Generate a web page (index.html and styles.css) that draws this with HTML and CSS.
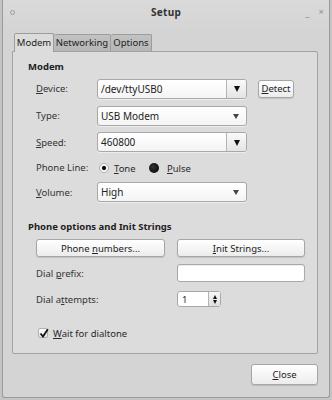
FILE: index.html
```html
<!DOCTYPE html>
<html>
<head>
<meta charset="utf-8">
<link rel="stylesheet" href="styles.css">
</head>
<body>
<div class="window">
  <div class="titlebar">
    <span class="wm-icon"></span>
    <span class="title">Setup</span>
    <span class="wm-btns"><span class="wm-min">_</span><span class="wm-close">×</span></span>
  </div>
  <div class="content">
    <div class="tabs">
      <div class="tab active">Modem</div>
      <div class="tab">Networking</div>
      <div class="tab">Options</div>
    </div>
    <div class="panel">
      <div class="heading">Modem</div>
      <div class="modem-grid">
        <div class="label"><u>D</u>evice:</div>
        <div class="combo editable"><span class="ctext">/dev/ttyUSB0</span><span class="carrow"><span class="tri"></span></span></div>
        <button class="btn detect"><u>D</u>etect</button>

        <div class="label">Type:</div>
        <div class="combo"><span class="ctext">USB Modem</span><span class="carrow plain"><span class="tri small"></span></span></div>
        <div></div>

        <div class="label"><u>S</u>peed:</div>
        <div class="combo editable"><span class="ctext">460800</span><span class="carrow"><span class="tri"></span></span></div>
        <div></div>

        <div class="label">Phone Line:</div>
        <div class="radios">
          <span class="radio on"></span><span class="rlabel first"><u>T</u>one</span>
          <span class="radio dark"></span><span class="rlabel second"><u>P</u>ulse</span>
        </div>
        <div></div>

        <div class="label"><u>V</u>olume:</div>
        <div class="combo"><span class="ctext">High</span><span class="carrow plain"><span class="tri small"></span></span></div>
        <div></div>
      </div>

      <div class="heading second">Phone options and Init Strings</div>
      <div class="btn-row">
        <button class="btn wide1">Phone <u>n</u>umbers...</button>
        <button class="btn wide2"><u>I</u>nit Strings...</button>
      </div>
      <div class="dial-grid">
        <div class="label">Dial <u>p</u>refix:</div>
        <div class="entry"></div>
        <div class="label">Dial a<u>t</u>tempts:</div>
        <div class="spin"><span class="stext">1</span><span class="sbtns"><span class="up"></span><span class="down"></span></span></div>
      </div>
      <div class="check-row">
        <span class="checkbox"><svg width="10" height="10" viewBox="0 0 10 10"><path d="M1.5 5.5 L4 8.5 L8.8 1.2" fill="none" stroke="#111" stroke-width="1.8"/></svg></span>
        <span class="clabel"><u>W</u>ait for dialtone</span>
      </div>
    </div>
    <div class="footer">
      <button class="btn close"><u>C</u>lose</button>
    </div>
  </div>
  <svg class="cursor" width="12" height="18" viewBox="0 0 12 18"><path d="M0.5 0.5 L0.5 14.5 L3.8 11.4 L6.2 16.8 L8.2 15.9 L5.9 10.6 L10.5 10.6 Z" fill="#fff" stroke="#000" stroke-width="1"/></svg>
</div>
</body>
</html>
```
FILE: styles.css
```css
html, body {
  margin: 0;
  padding: 0;
  background: #c4c4c4;
}
body {
  width: 332px;
  height: 400px;
  overflow: hidden;
  font-family: "Noto Sans", "DejaVu Sans", sans-serif;
  font-size: 9.5px;
  color: #2a2a2a;
}
.window {
  position: relative;
  margin-left: 2px;
  width: 326px;
  height: 397px;
  border: 1px solid #9a9a9a;
  border-top: none;
  border-radius: 0 0 3px 3px;
  background: #d4d4d4;
}
.titlebar {
  height: 33px;
  display: flex;
  align-items: flex-start;
  position: relative;
  background: linear-gradient(#dadada, #d4d4d4);
}
.wm-icon {
  position: absolute;
  left: 7px;
  top: 10px;
  width: 3px;
  height: 3px;
  border: 1px solid #9c9c9c;
  border-radius: 50%;
}
.title {
  width: 100%;
  text-align: center;
  font-weight: bold;
  font-size: 10px;
  color: #333;
  padding-top: 5px;
  letter-spacing: 0.3px;
}
.wm-btns {
  position: absolute;
  right: 5px;
  top: 5px;
  display: flex;
  gap: 9px;
  color: #8d8d8d;
  font-size: 9.5px;
}
.wm-min { position: relative; top: 1px; }
.content {
  padding-left: 9px;
}
.tabs {
  display: flex;
  height: 18px;
  margin-left: 2px;
  position: relative;
  z-index: 2;
}
.tab {
  height: 17px;
  margin-top: 1px;
  line-height: 16px;
  padding: 0;
  text-align: center;
  background: linear-gradient(#c2c2c2, #b6b6b6);
  border: 1px solid #9c9c9c;
  border-bottom: none;
  border-left: none;
  border-radius: 2px 2px 0 0;
  color: #222;
  font-size: 9.5px;
  box-sizing: border-box;
  white-space: nowrap;
}
.tab.active {
  height: 19px;
  margin-top: 0;
  line-height: 18px;
  background: #dcdcdc;
  border-left: 1px solid #9c9c9c;
  width: 40px;
}
.tabs .tab:nth-child(2) { width: 57px; }
.tabs .tab:nth-child(3) { width: 41px; }
.panel {
  width: 306px;
  height: 303px;
  box-sizing: border-box;
  border: 1px solid #a2a2a2;
  border-radius: 0 2px 2px 2px;
  background: #dcdcdc;
  padding: 9px 0 0 15px;
  position: relative;
  z-index: 1;
}
.heading {
  font-weight: bold;
  line-height: 12px;
  height: 12px;
  color: #222;
}
.heading.second {
  margin-top: 16px;
}
.modem-grid {
  display: grid;
  margin-top: 2px;
  margin-left: 8px;
  grid-template-columns: 61px 150px auto;
  grid-template-rows: 27px 27px 26px 24px 26px;
  align-items: center;
}
.label {
  color: #333;
  white-space: nowrap;
}
.combo {
  height: 20px;
  box-sizing: border-box;
  border: 1px solid #a8a8a8;
  border-radius: 3px;
  background: linear-gradient(#ffffff, #f4f4f4);
  display: flex;
  align-items: center;
  box-shadow: 0 1px 0 rgba(255,255,255,0.5);
}
.ctext {
  flex: 1;
  padding-left: 3px;
  font-size: 10px;
  color: #222;
}
.carrow {
  width: 20px;
  height: 100%;
  box-sizing: border-box;
  border-left: 1px solid #b4b4b4;
  background: linear-gradient(#fafafa, #e4e4e4);
  border-radius: 0 2px 2px 0;
  display: flex;
  align-items: center;
  justify-content: center;
}
.carrow.plain {
  border-left: none;
  background: none;
}
.tri {
  width: 0;
  height: 0;
  border-left: 3.5px solid transparent;
  border-right: 3.5px solid transparent;
  border-top: 6px solid #111;
  margin-top: 1px;
}
.tri.small {
  border-left-width: 3px;
  border-right-width: 3px;
  border-top: 5px solid #444;
}
.btn {
  font-family: "Noto Sans", "DejaVu Sans", sans-serif;
  font-size: 9.5px;
  color: #222;
  height: 19px;
  padding: 0;
  box-sizing: border-box;
  border: 1px solid #a6a6a6;
  border-radius: 3px;
  background: linear-gradient(#ffffff, #ececec);
  box-shadow: 0 1px 1px rgba(0,0,0,0.12);
}
.detect {
  width: 36px;
  height: 18px;
  margin-left: 11px;
  justify-self: start;
}
.radios {
  display: flex;
  align-items: center;
  height: 12px;
  margin-top: 2px;
}
.radio {
  width: 10px;
  height: 10px;
  box-sizing: border-box;
  border-radius: 50%;
  display: inline-block;
  flex: none;
}
.radio.on {
  margin-left: 2px;
  border: 1px solid #b0b0b0;
  background: radial-gradient(circle, #111 0 1.8px, #f6f6f6 2.4px);
}
.radio.dark {
  background: radial-gradient(circle at 40% 40%, #333, #000);
}
.rlabel.first {
  margin-left: 5px;
  width: 35px;
}
.rlabel.second {
  margin-left: 8px;
}
.btn-row {
  display: flex;
  gap: 12px;
  margin-top: 6px;
  margin-left: 8px;
}
.wide1 { width: 129px; height: 18px; }
.wide2 { width: 128px; height: 18px; }
.dial-grid {
  display: grid;
  margin-left: 8px;
  margin-top: 3px;
  grid-template-columns: 141px 128px;
  grid-template-rows: 26px 26px;
  align-items: center;
}
.entry {
  height: 18px;
  box-sizing: border-box;
  border: 1px solid #a8a8a8;
  border-radius: 3px;
  background: #fff;
  box-shadow: inset 0 1px 1px rgba(0,0,0,0.08);
}
.spin {
  width: 44px;
  height: 16px;
  box-sizing: border-box;
  border: 1px solid #a8a8a8;
  border-radius: 3px;
  background: #fff;
  display: flex;
  align-items: center;
}
.stext {
  flex: 1;
  padding-left: 4px;
  font-size: 9.5px;
}
.sbtns {
  width: 11px;
  height: 100%;
  border-left: 1px solid #b4b4b4;
  background: linear-gradient(#f6f6f6, #dedede);
  display: flex;
  flex-direction: column;
  align-items: center;
  justify-content: center;
  gap: 1px;
}
.up {
  width: 0; height: 0;
  border-left: 2.5px solid transparent;
  border-right: 2.5px solid transparent;
  border-bottom: 4px solid #111;
}
.down {
  width: 0; height: 0;
  border-left: 2.5px solid transparent;
  border-right: 2.5px solid transparent;
  border-top: 4px solid #111;
}
.check-row {
  display: flex;
  align-items: center;
  height: 22px;
  margin-top: 10px;
  margin-left: 10px;
}
.checkbox {
  width: 10px;
  height: 10px;
  box-sizing: border-box;
  border: 1px solid #b0b0b0;
  border-radius: 2px;
  background: linear-gradient(#fff, #e6e6e6);
  position: relative;
}
.checkbox svg {
  position: absolute;
  left: 0;
  top: -1px;
}
.clabel {
  margin-left: 5px;
}
.footer {
  display: flex;
  padding-left: 239px;
  padding-top: 10px;
}
.close {
  width: 67px;
  height: 21px;
}
u {
  text-decoration-thickness: 1px;
  text-underline-offset: 1px;
}
.cursor {
  position: absolute;
  left: 286px;
  top: 127px;
}
```
